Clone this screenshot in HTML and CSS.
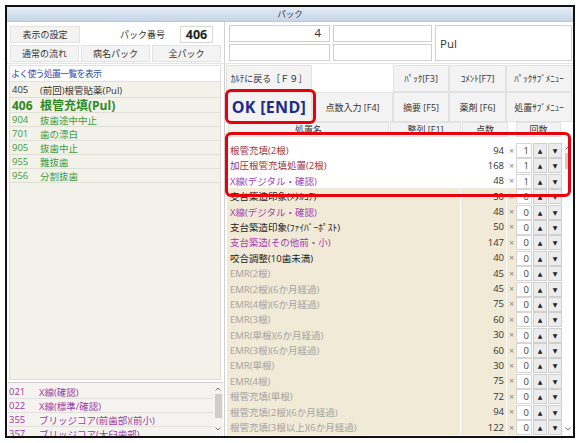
FILE: index.html
```html
<!DOCTYPE html>
<html lang="ja">
<head>
    <meta charset="UTF-8">
    <title>パック</title>
    <link rel="stylesheet" href="styles.css">
</head>
<body>
    <div class="window">
        <div class="titlebar">パック</div>

        <div class="top">
            <div class="top-left">
                <div class="tl-row">
                    <div class="btn w70">表示の設定</div>
                    <span class="pack-label">パック番号</span>
                    <div class="pack-no">406</div>
                </div>
                <div class="tl-row">
                    <div class="btn w70">通常の流れ</div>
                    <div class="btn w70">病名パック</div>
                    <div class="btn w70">全パック</div>
                </div>
            </div>
            <div class="top-right">
                <div class="field num">4</div>
                <div class="field"></div>
                <div class="field big">Pul</div>
                <div class="field"></div>
                <div class="field"></div>
            </div>
        </div>

        <div class="main">
            <div class="left">
                <div class="fav-head">よく使う処置一覧を表示</div>
                <div class="fav">
                    <div class="fav-row first"><span class="code">405</span><span>(前回)根管貼薬(Pul)</span></div>
                    <div class="fav-row cur"><span class="code">406</span><span>根管充填(Pul)</span></div>
                    <div class="fav-row grn"><span class="code">904</span><span>抜歯途中中止</span></div>
                    <div class="fav-row grn"><span class="code">701</span><span>歯の漂白</span></div>
                    <div class="fav-row grn"><span class="code">905</span><span>抜歯中止</span></div>
                    <div class="fav-row grn"><span class="code">955</span><span>難抜歯</span></div>
                    <div class="fav-row grn"><span class="code">956</span><span>分割抜歯</span></div>
                </div>
                <div class="sub">
                    <div class="sub-rows">
                        <div class="sub-row"><span class="code">021</span><span>X線(確認)</span></div>
                        <div class="sub-row"><span class="code">022</span><span>X線(標準/確認)</span></div>
                        <div class="sub-row"><span class="code">355</span><span>ブリッジコア(前歯部)(前小)</span></div>
                        <div class="sub-row"><span class="code">357</span><span>ブリッジコア(大臼歯部)</span></div>
                    </div>
                    <div class="vscroll small">
                        <svg class="arr" width="8" height="6" viewBox="0 0 8 6"><path d="M1.5 4.5 L4 2 L6.5 4.5" fill="none" stroke="#777" stroke-width="1"/></svg>
                        <div class="thumb"></div>
                        <svg class="arr down" width="8" height="6" viewBox="0 0 8 6"><path d="M1.5 1.5 L4 4 L6.5 1.5" fill="none" stroke="#777" stroke-width="1"/></svg>
                    </div>
                </div>
            </div>

            <div class="right">
                <div class="cmds">
                    <div class="btn">ｶﾙﾃに戻る［Ｆ９］</div>
                    <div class="blank"></div>
                    <div class="btn">ﾊﾟｯｸ[F3]</div>
                    <div class="btn">ｺﾒﾝﾄ[F7]</div>
                    <div class="btn">ﾊﾟｯｸｻﾌﾞﾒﾆｭｰ</div>
                    <div class="btn ok">OK [END]</div>
                    <div class="btn">点数入力 [F4]</div>
                    <div class="btn">摘要 [F5]</div>
                    <div class="btn">薬剤 [F6]</div>
                    <div class="btn">処置ｻﾌﾞﾒﾆｭｰ</div>
                </div>

                <div class="cols">
                    <div class="btn c-name">処置名</div>
                    <div class="btn c-sort">整列 [F1]</div>
                    <div class="btn c-pt">点数</div>
                    <div class="btn c-cnt">回数</div>
                </div>

                <div class="list">
                    <div class="rows">
                        <div class="row sel red"><span class="nm">根管充填(2根)</span><span class="pt">94</span><span class="x">×</span><span class="cnt">1</span><span class="up">▲</span><span class="dn">▼</span></div>
                        <div class="row sel red"><span class="nm">加圧根管充填処置(2根)</span><span class="pt">168</span><span class="x">×</span><span class="cnt">1</span><span class="up">▲</span><span class="dn">▼</span></div>
                        <div class="row sel pur"><span class="nm">X線(デジタル・確認)</span><span class="pt">48</span><span class="x">×</span><span class="cnt">1</span><span class="up">▲</span><span class="dn">▼</span></div>
                        <div class="row blk"><span class="nm">支台築造印象(ﾒﾀﾙｺｱ)</span><span class="pt">50</span><span class="x">×</span><span class="cnt">0</span><span class="up">▲</span><span class="dn">▼</span></div>
                        <div class="row pur"><span class="nm">X線(デジタル・確認)</span><span class="pt">48</span><span class="x">×</span><span class="cnt">0</span><span class="up">▲</span><span class="dn">▼</span></div>
                        <div class="row blk"><span class="nm">支台築造印象(ﾌｧｲﾊﾞｰﾎﾟｽﾄ)</span><span class="pt">50</span><span class="x">×</span><span class="cnt">0</span><span class="up">▲</span><span class="dn">▼</span></div>
                        <div class="row pur"><span class="nm">支台築造(その他前・小)</span><span class="pt">147</span><span class="x">×</span><span class="cnt">0</span><span class="up">▲</span><span class="dn">▼</span></div>
                        <div class="row blk"><span class="nm">咬合調整(10歯未満)</span><span class="pt">40</span><span class="x">×</span><span class="cnt">0</span><span class="up">▲</span><span class="dn">▼</span></div>
                        <div class="row gry"><span class="nm">EMR(2根)</span><span class="pt">45</span><span class="x">×</span><span class="cnt">0</span><span class="up">▲</span><span class="dn">▼</span></div>
                        <div class="row gry"><span class="nm">EMR(2根)(6か月経過)</span><span class="pt">45</span><span class="x">×</span><span class="cnt">0</span><span class="up">▲</span><span class="dn">▼</span></div>
                        <div class="row gry"><span class="nm">EMR(4根)(6か月経過)</span><span class="pt">75</span><span class="x">×</span><span class="cnt">0</span><span class="up">▲</span><span class="dn">▼</span></div>
                        <div class="row gry"><span class="nm">EMR(3根)</span><span class="pt">60</span><span class="x">×</span><span class="cnt">0</span><span class="up">▲</span><span class="dn">▼</span></div>
                        <div class="row gry"><span class="nm">EMR(単根)(6か月経過)</span><span class="pt">30</span><span class="x">×</span><span class="cnt">0</span><span class="up">▲</span><span class="dn">▼</span></div>
                        <div class="row gry"><span class="nm">EMR(3根)(6か月経過)</span><span class="pt">60</span><span class="x">×</span><span class="cnt">0</span><span class="up">▲</span><span class="dn">▼</span></div>
                        <div class="row gry"><span class="nm">EMR(単根)</span><span class="pt">30</span><span class="x">×</span><span class="cnt">0</span><span class="up">▲</span><span class="dn">▼</span></div>
                        <div class="row gry"><span class="nm">EMR(4根)</span><span class="pt">75</span><span class="x">×</span><span class="cnt">0</span><span class="up">▲</span><span class="dn">▼</span></div>
                        <div class="row gry"><span class="nm">根管充填(単根)</span><span class="pt">72</span><span class="x">×</span><span class="cnt">0</span><span class="up">▲</span><span class="dn">▼</span></div>
                        <div class="row gry"><span class="nm">根管充填(2根)(6か月経過)</span><span class="pt">94</span><span class="x">×</span><span class="cnt">0</span><span class="up">▲</span><span class="dn">▼</span></div>
                        <div class="row gry"><span class="nm">根管充填(3根以上)(6か月経過)</span><span class="pt">122</span><span class="x">×</span><span class="cnt">0</span><span class="up">▲</span><span class="dn">▼</span></div>
                    </div>
                    <div class="vscroll">
                        <svg class="arr" width="8" height="6" viewBox="0 0 8 6"><path d="M1.5 4.5 L4 2 L6.5 4.5" fill="none" stroke="#777" stroke-width="1"/></svg>
                        <div class="thumb"></div>
                        <svg class="arr down" width="8" height="6" viewBox="0 0 8 6"><path d="M1.5 1.5 L4 4 L6.5 1.5" fill="none" stroke="#777" stroke-width="1"/></svg>
                    </div>
                </div>
            </div>
        </div>

        <!-- red highlight marks drawn over the form -->
        <div class="mark mark-ok"></div>
        <div class="mark mark-list"></div>
    </div>
</body>
</html>
```

FILE: styles.css
```css
:root {
    --btn-bg: #f3f3f3;
    --btn-border: #e2e2e2;
    --line: #d0d0d0;
    --beige: #f1ead6;
    --red: #a33343;
    --purple: #a23cb0;
    --green: #3f9a3f;
    --mark: #e8000b;
}

* {
    margin: 0;
    padding: 0;
    box-sizing: border-box;
}

body {
    font-family: "Open Sans", "Noto Sans CJK JP", sans-serif;
    font-size: 9px;
    color: #333;
    background: #fff;
}

.window {
    position: relative;
    margin: 5px 0 0 5px;
    width: 570px;
    height: 433px;
    border: 2px solid #111;
    background: #fff;
    display: flex;
    flex-direction: column;
    overflow: hidden;
}

.titlebar {
    height: 15px;
    flex: none;
    background: linear-gradient(#e4ecf5, #c6d5e6);
    border-bottom: 1px solid #b9c9db;
    text-align: center;
    line-height: 14px;
    font-size: 8.5px;
    color: #333;
}

.btn {
    background: var(--btn-bg);
    border: 1px solid var(--btn-border);
    display: flex;
    align-items: center;
    justify-content: center;
    white-space: nowrap;
    color: #333;
}

/* top band */
.top {
    display: flex;
    height: 42px;
    flex: none;
    border-bottom: 1px solid #e4e4e4;
}

.top-left {
    width: 218px;
    padding: 4px 3px 0 3px;
    display: flex;
    flex-direction: column;
    gap: 2px;
    border-right: 1px solid var(--line);
}

.tl-row {
    display: flex;
    height: 17px;
    gap: 2px;
}

.w70 {
    width: 70px;
}

.pack-label {
    flex: 1;
    text-align: right;
    padding-right: 13px;
    line-height: 17px;
}

.pack-no {
    width: 33px;
    margin-right: 8px;
    border: 1px solid #d8d8d8;
    background: #fff;
    font-weight: bold;
    font-size: 12.5px;
    text-align: center;
    line-height: 15px;
    color: #222;
}

.top-right {
    flex: 1;
    display: grid;
    grid-template-columns: 101px 99px 137px;
    grid-template-rows: 17px 17px;
    gap: 2px 3px;
    padding: 3px 0 0 4px;
}

.field {
    border: 1px solid #cfcfcf;
    background: #fff;
}

.field.num {
    text-align: right;
    padding-right: 8px;
    font-size: 11.5px;
    line-height: 14px;
}

.field.big {
    grid-row: span 2;
    font-size: 11.5px;
    padding-left: 4px;
    display: flex;
    align-items: center;
    color: #333;
}

/* main area */
.main {
    flex: 1;
    display: flex;
    min-height: 0;
}

.left {
    width: 218px;
    border-right: 1px solid var(--line);
    padding: 1px 3px 0 2px;
    display: flex;
    flex-direction: column;
}

.fav-head {
    height: 17px;
    flex: none;
    border: 1px solid #e0e0e0;
    background: #fff;
    color: #2e4fb2;
    padding-left: 1px;
    line-height: 15px;
    letter-spacing: -0.8px;
}

.fav {
    flex: 1;
    background: #f3f2ea;
    border: 1px solid #e0dfd6;
    border-top: none;
}

.fav-row {
    height: 14px;
    display: flex;
    align-items: center;
    padding-left: 2px;
    border-bottom: 1px solid #e0dfd6;
    white-space: nowrap;
    font-size: 9.5px;
}

.fav-row .code {
    width: 28px;
}

.fav-row.first {
    height: 16px;
    color: #333;
}

.fav-row.cur {
    height: 15px;
    color: #2c8a1f;
    font-weight: bold;
    font-size: 12px;
}

.fav-row.grn {
    color: var(--green);
}

.sub {
    height: 54px;
    flex: none;
    margin: 2px -2px 0 -1px;
    display: flex;
    border-top: 1px solid #cfcfcf;
    background: #f4f3ef;
}

.sub-rows {
    flex: 1;
    padding-top: 2px;
    overflow: hidden;
}

.sub-row {
    height: 14px;
    display: flex;
    align-items: center;
    padding-left: 1px;
    color: #9a3aa0;
    border-bottom: 1px solid #e2e0da;
    white-space: nowrap;
    font-size: 9.5px;
}

.sub-row .code {
    width: 30px;
}

.vscroll {
    width: 10px;
    display: flex;
    flex-direction: column;
    align-items: center;
    background: #f4f4f4;
    padding-top: 3px;
}

.vscroll .thumb {
    width: 7px;
    height: 18px;
    margin-top: 2px;
    background: #cdcdcd;
}

.vscroll .down {
    margin-top: auto;
    margin-bottom: 4px;
}

.vscroll.small .thumb {
    height: 24px;
}

/* right side */
.right {
    flex: 1;
    display: flex;
    flex-direction: column;
    padding: 1px 0 0 1px;
}

.cmds {
    display: grid;
    grid-template-columns: 86px 81px 56px 57px 66px;
    grid-template-rows: 27px 30px;
    flex: none;
}

.cmds .btn {
    font-size: 9px;
}

.btn.ok {
    font-family: "Open Sans", sans-serif;
    font-weight: bold;
    font-size: 16px;
    color: #1b2a8c;
    letter-spacing: 0.3px;
}

.cols {
    display: flex;
    height: 15px;
    flex: none;
    padding-left: 2px;
    gap: 1px;
}

.c-name {
    width: 161px;
}

.c-sort {
    width: 71px;
}

.c-pt {
    width: 46px;
}

.c-cnt {
    width: 45px;
    margin-left: 7px;
}

.list {
    flex: 1;
    display: flex;
    margin-top: 5px;
    padding-left: 1px;
    min-height: 0;
}

.rows {
    width: 336px;
}

.row {
    height: 15.4px;
    display: grid;
    grid-template-columns: 234px 46px 9px 17px 15px 15px;
    align-items: stretch;
    white-space: nowrap;
    font-size: 9.5px;
}

.row > span {
    display: flex;
    align-items: center;
    background: var(--beige);
    border-bottom: 1px solid #faf7ee;
}

.row.sel .nm,
.row.sel .pt,
.row.sel .x {
    background: #fff;
    border-bottom-color: #eee;
}

.nm {
    padding-left: 3px;
    border-right: 1px solid #fff;
}

.pt {
    justify-content: flex-end;
    padding-right: 2px;
    color: #333;
    border-right: 1px solid #fff;
}

.row .x {
    justify-content: center;
    color: #888;
    font-size: 9px;
}

.row .cnt {
    background: #fff;
    border: 1px solid #d6d6d6;
    justify-content: flex-end;
    padding-right: 2px;
    color: #444;
    margin: 1px 1px 1px 0;
}

.row .up,
.row .dn {
    justify-content: center;
    background: #ececec;
    border: 1px solid #cfcfcf;
    font-family: "DejaVu Sans", sans-serif;
    font-size: 6px;
    color: #222;
    margin: 1px 1px 1px 0;
}

.red .nm {
    color: var(--red);
}

.pur .nm {
    color: var(--purple);
}

.blk .nm {
    color: #222;
}

.gry .nm {
    color: #a3a3a3;
}

.list .vscroll {
    width: 10px;
    background: #fff;
}

.list .vscroll .thumb {
    width: 6px;
    height: 16px;
}

/* annotation marks */
.mark {
    position: absolute;
    border: 3px solid var(--mark);
    border-radius: 6px;
}

.mark-ok {
    left: 218px;
    top: 82px;
    width: 91px;
    height: 35px;
}

.mark-list {
    left: 218px;
    top: 125px;
    width: 346px;
    height: 65px;
}
```
